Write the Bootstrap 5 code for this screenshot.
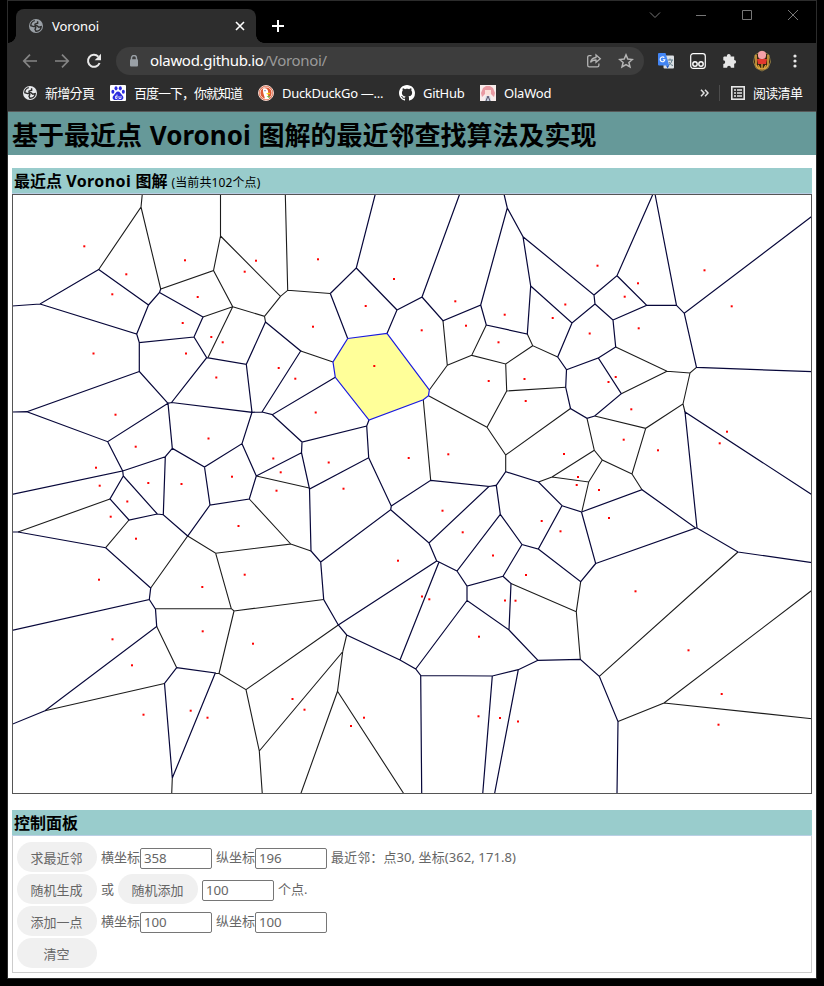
<!DOCTYPE html>
<html lang="zh-CN">
<head>
<meta charset="utf-8">
<title>Voronoi</title>
<link href="https://cdn.jsdelivr.net/npm/bootstrap@5.3.0/dist/css/bootstrap.min.css" rel="stylesheet">
<style>
body{background:#000;color:#000;font-family:"Noto Sans","Noto Sans CJK SC",sans-serif;width:824px;height:986px;overflow:hidden}
svg{display:block;flex:none}
.win{width:810px;height:979px;margin-left:7px;border:1px solid #2c2c2c;background:#fff;overflow:hidden}
.tabs{height:42px;background:#000}
.tab-on{width:240px;height:34px;margin:8px 0 0 8px;background:#2d2d2d;border-radius:8px 8px 0 0;padding:0 10px 0 13px;color:#fff;font-size:13px;letter-spacing:-.1px}
.tab-on::before,.tab-on::after{content:"";position:absolute;bottom:0;width:8px;height:8px}
.tab-on::before{left:-8px;background:radial-gradient(circle at 0 0,transparent 7.5px,#2d2d2d 8px)}
.tab-on::after{right:-8px;background:radial-gradient(circle at 100% 0,transparent 7.5px,#2d2d2d 8px)}
.plus{margin:18px 0 0 15px}
.winbtns{margin:8px 17px 0 0;gap:34px}
.tools{height:36px;background:#2d2d2d;padding:4px 19px 4px 14px}
.omni{width:528px;height:28px;border-radius:14px;background:#3d3d3d;margin-left:14px;padding:0 10px 0 13px;color:#fff;font-size:15px}
.omni span{letter-spacing:-.32px;padding-bottom:2px}
.omni i{font-style:normal;color:#9a9a9a}
.marks{height:33px;background:#2d2d2d;border-bottom:1px solid #585858;padding:0 14px 5px 14px;color:#fff;font-size:13px;line-height:20px}
.mk{white-space:nowrap;overflow:visible}
.zh{letter-spacing:-.7px}
.page-title{height:43px;background:#699;font-size:26px;font-weight:700;line-height:46px;padding-left:4px;margin:0;white-space:nowrap}
.page-title span{word-spacing:1px}
.bar{height:26px;background:#9cc;border-bottom:1px solid #b9cfe4;padding-left:2px;font-size:16px;font-weight:700;line-height:27px;margin:0;white-space:nowrap}
.bar b{font-weight:700;letter-spacing:.42px}
.bar small{font-size:12px;font-weight:400;letter-spacing:.1px}
.plot{margin:0 4px}
.panel{height:137px;border:1px solid #ccc;border-top:0;padding:6px 0 0 4px;color:#666;font-size:13px}
.line{height:30px;margin-bottom:2px;white-space:nowrap}
.line span{padding-top:2px}
.pill{width:80px;height:30px;border:0;border-radius:15px;background:#f0f0f0;color:#666;padding:4px 1px 0 0;font-size:13px}
.num{width:72px;height:21px;border:1px solid #767676;border-radius:2px;padding:0 0 0 3px;font-size:13.3px;color:#666;background:#fff;line-height:19px;margin-top:2px;letter-spacing:-.15px}
.n{fill:none;stroke:#07073a;stroke-width:1.2}
.k{fill:none;stroke:#1c1c1c;stroke-width:1.1}
</style>
<script src="https://cdn.jsdelivr.net/npm/bootstrap@5.3.0/dist/js/bootstrap.bundle.min.js"></script>
</head>
<body>
<svg width="0" height="0" class="position-absolute"><defs>
<symbol id="globe" viewBox="0 0 14 14"><circle cx="7" cy="7" r="7" fill="currentColor"/><path d="M5.800 1.600C3.500 2 1.700 4.300 1.800 6.700L4.700 7.600C6 7.300 6.800 8 6.800 8.800L6 10.200 7 12.200C9.800 12.300 12 10.200 12.200 7.600L9.800 8.200 8.300 6.900 6.300 6.500C5.600 5.600 6 4.800 7 4.700L8.700 4.200 8.600 2.200" fill="none" stroke="#2d2d2d" stroke-width="1.400"/></symbol>
</defs></svg>
<main class="win">
<div class="tabs d-flex align-items-start">
  <div class="tab-on d-flex align-items-center position-relative">
    <svg width="14" height="14" color="#9aa0a6"><use href="#globe"/></svg><span style="margin-left:9px;padding-top:1px">Voronoi</span>
    <svg class="ms-auto" width="12" height="12" viewBox="0 0 12 12"><path d="M2 2l8 8M10 2l-8 8" stroke="#fff" stroke-width="1.6"/></svg>
  </div>
  <svg class="plus" width="14" height="14" viewBox="0 0 14 14"><path d="M7 1v12M1 7h12" stroke="#fff" stroke-width="2"/></svg>
  <div class="winbtns d-flex ms-auto">
    <svg width="12" height="12" viewBox="0 0 12 12"><path d="M1 3.500l5 5 5-5" fill="none" stroke="#777"/></svg>
    <svg width="12" height="12" viewBox="0 0 12 12"><path d="M1 6.500h10" stroke="#777"/></svg>
    <svg width="12" height="12" viewBox="0 0 12 12"><path d="M1.500 1.500h9v9h-9z" fill="none" stroke="#777"/></svg>
    <svg width="12" height="12" viewBox="0 0 12 12"><path d="M1 1l10 10M11 1L1 11" stroke="#777"/></svg>
  </div>
</div>
<div class="tools d-flex align-items-center">
  <svg width="16" height="16" viewBox="0 0 16 16"><path d="M15 8H2M8 1.700L1.800 8 8 14.300" fill="none" stroke="#858585" stroke-width="1.700"/></svg>
  <svg class="ms-3" width="16" height="16" viewBox="0 0 16 16"><path d="M1 8h13M8 1.700L14.200 8 8 14.300" fill="none" stroke="#858585" stroke-width="1.700"/></svg>
  <svg class="ms-3" width="16" height="16" viewBox="0 0 16 16"><path d="M13.600 10A6 6 0 1 1 12.300 3.600" fill="none" stroke="#e8e8e8" stroke-width="2"/><path d="M15 .8v6.400H8.700z" fill="#e8e8e8"/></svg>
  <div class="omni d-flex align-items-center">
    <svg width="10" height="12" viewBox="0 0 10 12"><path d="M2.500 5V3a2.500 2.500 0 0 1 5 0v2" fill="none" stroke="#9aa0a6" stroke-width="1.400"/><rect x="1" y="4.200" width="8" height="7.400" rx="1" fill="#9aa0a6"/></svg>
    <span style="margin-left:11px">olawod.github.io<i>/Voronoi/</i></span>
    <svg class="ms-auto" width="16" height="16" viewBox="0 0 16 16" fill="none" stroke="#b4b4b4" stroke-width="1.300"><path d="M5.500 2.600H3.300A1.600 1.600 0 0 0 1.700 4.200v8a1.600 1.600 0 0 0 1.600 1.600h8a1.600 1.600 0 0 0 1.600-1.600V10.600"/><path d="M4.500 9.500C5.200 6.300 7 4.700 10 4.500V2L14.300 5.800 10 9.300V7C7.500 6.900 5.700 7.700 4.500 9.500z"/></svg>
    <svg style="margin-left:16px" width="16" height="16" viewBox="0 0 16 16"><path d="M8 1.900L9.800 6.100 14.400 6.500 10.900 9.500 12 14 8 11.600 4 14 5.100 9.500 1.600 6.500 6.200 6.100z" fill="none" stroke="#b4b4b4" stroke-width="1.500"/></svg>
  </div>
  <svg style="margin-left:14px" width="16" height="16" viewBox="0 0 16 16"><rect x="5.500" y="2.500" width="10.500" height="13" rx="1" fill="#dce0e4"/><path d="M9.500 7H15M12 5.500V7M14 7c-.5 3-2 4.500-4 5.500M11 9c1 2 2 3 4 3.500" fill="none" stroke="#607d8b"/><path d="M1 0h6.500l3.700 12.500H1a1 1 0 0 1-1-1V1a1 1 0 0 1 1-1z" fill="#4285f4"/><path d="M8 12.500h3.200L9.500 15.500z" fill="#1a57c5"/><path d="M6.300 4.700A2.400 2.400 0 1 0 6.900 6.700H4.800" fill="none" stroke="#fff" stroke-width="1.100"/></svg>
  <svg class="ms-3" width="16" height="16" viewBox="0 0 16 16" fill="none" stroke="#fff"><rect x=".7" y=".7" width="14.600" height="14.600" rx="2.500" stroke-width="1.200"/><circle cx="5" cy="11" r="2.200" stroke-width="1.400"/><circle cx="11" cy="11" r="2.200" stroke-width="1.400"/></svg>
  <svg style="margin-left:16px" width="16" height="16" viewBox="0 0 16 16"><path d="M2 3.500h3a1.900 1.900 0 1 1 3.600 0h3.600v3.400a1.900 1.900 0 1 1 0 3.800v4H8.900a1.900 1.900 0 1 0-3.800 0H1.300v-3.700a1.900 1.900 0 1 0 0-3.800V4.200z" fill="#e6e6e6"/></svg>
  <svg style="margin-left:14px" width="20" height="22" viewBox="0 0 20 22"><path d="M10 1l7 4 1.500 7-2.500 6-6 3-6-3-2.500-6L3 5z" fill="#35230f" stroke="#8d7a45"/><path d="M4 5v10c1 3 3 4 6 4s5-1 6-4V5" fill="none" stroke="#dda640" stroke-width="1.600"/><rect x="6" y="1" width="8" height="8" rx="3.500" fill="#f5a0a8"/><path d="M5 9h10l-1 5H6z" fill="#e2382f"/><path d="M6 15l2 3M10 14v5M14 15l-2 3" stroke="#e0a93c" stroke-width="1.300"/></svg>
  <svg class="ms-auto" width="4" height="16" viewBox="0 0 4 16" fill="#e8e8e8"><circle cx="2" cy="3" r="1.600"/><circle cx="2" cy="8" r="1.600"/><circle cx="2" cy="13" r="1.600"/></svg>
</div>
<div class="marks d-flex align-items-center">
  <svg width="14" height="14" color="#e8eaed" style="margin-left:1px"><use href="#globe"/></svg><span class="mk zh" style="margin-left:8px;width:49px" lang="zh-TW">新增分頁</span>
  <svg style="margin-left:16px" width="16" height="16" viewBox="0 0 16 16"><rect width="16" height="16" rx="1" fill="#fff"/><g fill="#2b2bdf"><ellipse cx="6" cy="3.300" rx="1.500" ry="2.100"/><ellipse cx="10.300" cy="3.300" rx="1.500" ry="2.100"/><ellipse cx="2.900" cy="6.700" rx="1.500" ry="2"/><ellipse cx="13.300" cy="6.700" rx="1.500" ry="2"/><path d="M8 6.500c2 0 2.500 2 4 3.500 2.700 2.500 1 5-1 5-1.500 0-2-.3-3-.3s-1.500.3-3 .3c-2 0-3.700-2.500-1-5C5.500 8.500 6 6.500 8 6.500z"/></g><path d="M7 9.500v4H5.500v-2.300H7M9 11v2.500h2V11" fill="none" stroke="#fff" stroke-width=".8"/></svg>
  <span class="mk" style="margin-left:8px;width:109px;letter-spacing:-1px">百度一下，你就知道</span>
  <svg style="margin-left:15px" width="16" height="16" viewBox="0 0 16 16"><circle cx="8" cy="8" r="7.500" fill="#de5833" stroke="#f1d7cf"/><circle cx="8" cy="8" r="6" fill="none" stroke="#fff" stroke-width=".8"/><path d="M5 3.500c3-1 5 0 5.200 3.500L10 10l1 4H7C6.500 11 5 8 5 6z" fill="#fff"/><path d="M8.300 8.200l3.700-.5v1.200L9 9.500z" fill="#fdd20a"/><path d="M8.500 11.500l3-1v2.500z" fill="#65bc46"/><circle cx="7" cy="5.700" r=".6" fill="#2d4f8e"/></svg>
  <span class="mk" style="margin-left:8px;width:101px;letter-spacing:-.3px">DuckDuckGo —...</span>
  <svg style="margin-left:16px" width="16" height="16" viewBox="0 0 16 16"><path fill="#fff" d="M8 0C3.580 0 0 3.580 0 8c0 3.540 2.290 6.530 5.470 7.590.4.070.55-.17.55-.38 0-.19-.01-.82-.01-1.490-2.010.37-2.530-.49-2.690-.94-.09-.23-.48-.94-.82-1.130-.28-.15-.68-.52-.01-.53.63-.01 1.080.58 1.230.82.72 1.210 1.870.87 2.330.66.07-.52.28-.87.51-1.070-1.780-.2-3.640-.89-3.640-3.950 0-.87.31-1.590.82-2.150-.08-.2-.36-1.020.08-2.120 0 0 .67-.21 2.200.82.640-.18 1.320-.27 2-.27s1.360.09 2 .27c1.530-1.040 2.200-.82 2.200-.82.44 1.100.16 1.920.08 2.120.51.560.82 1.270.82 2.150 0 3.070-1.870 3.750-3.650 3.950.29.25.54.73.54 1.480 0 1.070-.01 1.930-.01 2.200 0 .21.15.46.55.38A8.010 8.010 0 0 0 16 8c0-4.420-3.580-8-8-8z"/></svg>
  <span class="mk" style="margin-left:8px;width:41px;letter-spacing:-.3px">GitHub</span>
  <svg style="margin-left:16px" width="16" height="16" viewBox="0 0 16 16"><path fill="#f7eceb" d="M0 0h16v16H0z"/><path d="M2 12L1 8 3 3 6 1h4l3 2 2 5-1 4-3-3H5z" fill="#e89aa2"/><path d="M5 5h6v4l-3 2-3-2z" fill="#fbe0d8"/><path d="M5 16l1-5h4l1 5z" fill="#c6d4df"/><path d="M8 11l-2 5M8 11l2 5" stroke="#5c5068"/></svg>
  <span class="mk" style="margin-left:8px;letter-spacing:-.2px">OlaWod</span>
  <svg class="ms-auto" width="9" height="8" viewBox="0 0 9 8"><path d="M1 .8L4 4 1 7.200M5 .8L8 4 5 7.200" fill="none" stroke="#e0e0e0" stroke-width="1.500"/></svg>
  <div class="vr" style="height:16px;align-self:center;margin-left:10px;color:#aaa"></div>
  <svg style="margin-left:11px" width="14" height="14" viewBox="0 0 14 14"><rect x=".8" y=".8" width="12.400" height="12.400" fill="none" stroke="#e6e6e6" stroke-width="1.600"/><path d="M3 4h2M6 4h5M3 7h2M6 7h5M3 10h2M6 10h5" stroke="#e6e6e6" stroke-width="1.500"/></svg>
  <span class="mk zh" style="margin-left:8px;width:49px">阅读清单</span>
</div>
<h1 class="page-title"><span>基于最近点 Voronoi 图解的最近邻查找算法及实现</span></h1>
<section class="plot" style="margin-top:13px">
  <h2 class="bar">最近点 <b>Voronoi</b> 图解 <small>(当前共102个点)</small></h2>
  <svg width="800" height="600" viewBox="12 194 800 600">
    <path d="M347.700 338.500L387 333.500 429.300 390 428.500 395.700 423.300 399.700 369 420 335.300 377.300 333 362z" fill="#ffff99"/>
    <path class="k" d="M142.300 194L141 207 98.700 269.500M141 207L160.700 289 213.500 270.500 220.500 236V194M213.500 270.500L232.700 306.700 203 317M232.700 306.700L208 357.500M220.500 236L280.500 296.300 287.700 290.300 285.300 194M287.700 290.300L330.300 293.500M280.500 296.300L264.500 316.300 232.700 306.700M264.500 316.300L265.500 322M300.700 351L333 362M527.300 334L532.700 345.700 557.700 357M532.700 345.700L505.700 364 471.700 355.300 486.300 325M443 320.700L447.300 365.300 471.700 355.300M447.300 365.300L429.300 390M505.700 364L506.700 391 565.700 387.300M506.700 391L487 427.300 428.500 395.700M487 427.300L505.700 455 570.500 408.500M505.700 455V471.700M696.500 367.300L690 373 667 371.300 615.700 347M667 371.300L621.300 393.700M690 373L683 404 645.700 428.300 594.700 416M645.700 428.300L632 474 602.300 460 594.300 450.300 587 418.300M683 404L685 412M632 474L642 489.700M594.300 450.300L552 477 538.500 482M552 477L588.700 482 602.300 460M588.700 482L582 511M738 552L599.300 676.300M430.700 480.300L423.300 400M256.300 476L309.300 488M249.300 499L290.700 544 215.700 553.300 187.700 536 150.700 588M290.700 544L311 551M215.700 553.300L231.300 608.700H155.500M231.300 608.700L234 611 323.700 599.500M234 611L219 673.500 246 689.700 338.300 625M219 673.500H215.300M156.700 626.500L176.700 667.700M45 710.700L164.500 683.500M246 689.700L259.300 751 262.300 794M259.300 751L342.700 651.700 337.500 691.300 300.700 794M337.500 691.300L404 794M342.700 651.700L346.700 635M172.300 778L171.700 794M110 499L18 532M129 520L105.700 547.700M511 583.500L576.300 611.700 580.700 581.700M576.300 611.700L580.300 659.300M618 721.500L664 703 812 590.300M664 703L812 718.700"/>
    <path class="n" d="M98.700 269.500L40 304 12 306M98.700 269.500L148.500 305 136.700 334 40 304M148.500 305L159.500 292.500 160.700 289M159.500 292.500L203 317 194 337 139.300 342.700 136.700 334M139.300 342.700V371.500L168 403.300 171.500 402.500 206.700 357.700 194 337M206.700 357.700L246.300 364.300 265.500 322 300.700 351 262 412 252 412.300 246.300 364.300M171.500 402.500L252 412.300 242 443.700 204.500 467 172.300 448.300 168 403.300 107.700 441.700 27 411.700 139.300 371.500M27 411.700L12 412M262 412L272.300 414.700 335.300 377.300M272.300 414.700L302 442 366.700 426 369 420M366.700 426L368.700 457.700 309.500 489 301.500 452.700 302 442M301.500 452.700L256.300 476 242 443.700M256.300 476L249.300 499 210 505 204.500 467M210 505L187.700 536 163.300 514.700 157.300 514 123.300 476 122.700 471 12 494.300M122.700 471L107.700 441.700M122.700 471L165.300 456.700 172.300 448.300M165.300 456.700L163.300 514.700M157.300 514L129 520 110 499 123.300 476M12 532H18L105.700 547.700 150.700 588 149.300 599.500 12 630.300M149.300 599.500L155.500 609.300 156.700 626.500 45 710.700 12 724.300M176.700 667.700L164.500 683.500 172.300 778 215.300 673 176.700 667.700M309.500 489L311 551 320.700 562 323.700 599.500 338.300 625 346.700 635 400 660 415.700 669 420.700 675.500 421.700 794M320.700 562L390.700 509.700 391.300 506 368.700 457.700M391.300 506L430.700 480.300 489 486.500 429 543 390.700 509.700M429 543L436.700 561 338.300 625M436.700 561L439 562 400 660M439 562L457 571 500.300 514.300 496.300 485.300 489 486.500M496.300 485.300L505.700 471.700 538.500 482 562 505.700 538.300 549 522 544.500 500.300 514.300M522 544.500L503 576.300 467 586 457 571M503 576.300L511 583.500 509 630 467 600.500V586M467 600.500L415.700 669M509 630L538 660.300 580.300 659.300 599.300 676.300 618 721.500 617 794M538 660.300L518.300 669.700 492.300 676 420.700 675.500M492.300 676L482.700 794M518.300 669.700L494.500 794M538.300 549L580.700 581.700 595.700 563.500 581.500 512 562 505.700M581.500 512L642 489.700 695.700 528 595.700 563.500M695.700 528H697L738 552 812 562.700M697 528L685 412 812 494.700"/>
    <path class="n" d="M330.300 293.500L356.300 268 375.300 194M356.300 268L397 310 387 333.500M330.300 293.500L347.700 338.500M397 310L422 297 459.700 194M422 297L443 320.700 480.700 305 507.300 208 504 194M507.300 208L523 236.700 530.700 286 527.300 334 486.300 325 480.700 305M523 236.700L594 295 595 304 572 323 530.700 286M572 323L557.700 357 566.500 369.700 565.700 387.300 570.500 408.500 587 418.300 594.700 416 621.300 393.700 598.300 358 566.500 369.700M598.300 358L615.700 347 613 320 595 304M594 295L617 275.700 653 194M617 275.700L646.700 305.300 613 320M646.700 305.300H676.500L655 194M676.500 305.300L684.300 313.300 812 216.300M684.300 313.300L696.500 367.300 812 371.700"/>
    <path d="M347.700 338.500L387 333.500 429.300 390 428.500 395.700 423.300 399.700 369 420 335.300 377.300 333 362z" fill="none" stroke="#1a1ae0" stroke-width="1.200"/>
    <g id="dots" fill="#f00"></g>
    <rect x="12.500" y="194.500" width="799" height="599" fill="none" stroke="#555"/>
  </svg>
</section>
<section class="plot" style="margin-top:16px">
  <h2 class="bar">控制面板</h2>
  <div class="panel">
    <div class="line d-flex align-items-center"><button class="pill">求最近邻</button><span class="ms-1">横坐标</span><input class="num" value="358"><span class="ms-1">纵坐标</span><input class="num" value="196"><span class="ms-1" style="letter-spacing:.09px">最近邻：点30, 坐标(362, 171.8)</span></div>
    <div class="line d-flex align-items-center"><button class="pill">随机生成</button><span class="mx-1">或</span><button class="pill">随机添加</button><input class="num ms-1" value="100"><span class="ms-1">个点.</span></div>
    <div class="line d-flex align-items-center"><button class="pill">添加一点</button><span class="ms-1">横坐标</span><input class="num" value="100"><span class="ms-1">纵坐标</span><input class="num" value="100"></div>
    <div class="line d-flex align-items-center"><button class="pill">清空</button></div>
  </div>
</section>
</main>
<script>
// Sites of the diagram, x,y pairs
const sites="84.3,246.3 126.3,274.3 112.3,294.3 185,260.3 197.7,297 182.7,323 211.3,337 93.5,353.5 186,353.5 216.3,377.5 256,260.7 244.7,271.7 318,259.3 394,279 365.7,306 313,326.7 222.7,342.3 278.7,368 295.3,378.7 374.3,366 455.3,301.3 421.7,330.3 466,325.7 504.7,314.7 498.5,342.3 488.7,381 524.5,379 525.7,401 597.5,265.7 565.3,304.5 552.7,318 589.7,333.5 608.5,382 615.7,377 704.5,270.3 638,283.3 624.7,296.7 731.7,306.3 638.7,328.3 631.3,409.3 115.5,414.7 135.7,446.7 96,467.7 99.7,485.7 148.3,483 127.3,501.5 181.5,484 208.5,438.5 232,476.7 110.7,516.7 136,538.7 238.5,526 99,579.7 202.3,587 244.7,574.7 315.7,412.5 273.3,458.5 280.7,472.3 276.5,490.7 328.7,462.5 343.5,488.7 408.7,458 448.3,454.3 442.5,510.7 462.7,532.3 398,560.7 493,555.5 526,575 422,596.5 429.3,599.3 505,600.5 515.5,600.7 623.7,439.7 658,450.3 564,454 578,477 576.7,485 599,490 609,518 541.7,521 560.5,531.3 719.7,443.3 727,431.7 635.5,591.3 112.5,639.3 132,665.3 202.7,631.3 253,643.7 143.5,714.7 190.7,710.7 207.5,717.7 292.5,699 304.5,709.7 351,726 364,717.7 479,636.7 478.5,716.3 500,718 518,721.5 688.5,650.3 721.7,694 718.5,724.7";
document.getElementById("dots").innerHTML=sites.split(" ").map(s=>{const [x,y]=s.split(",");return `<rect x="${x-1}" y="${y-1}" width="2" height="2"/>`}).join("");
</script>
</body>
</html>
